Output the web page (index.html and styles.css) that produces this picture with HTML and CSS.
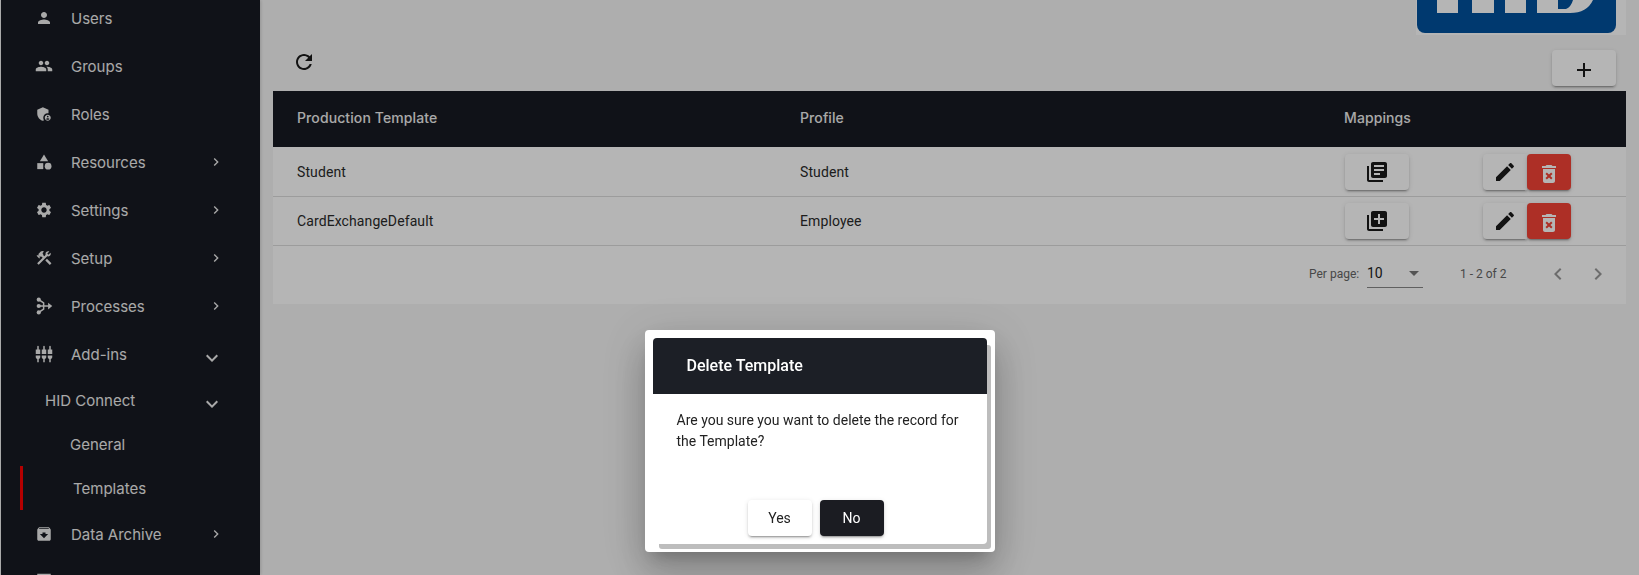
FILE: index.html
```html
<!DOCTYPE html>
<html lang="en">
<head>
<meta charset="utf-8">
<title>Templates</title>
<link rel="stylesheet" href="styles.css">
</head>
<body>
<div class="app">
  <nav class="sidebar">
    <a class="nav-row"><svg class="nav-icon" viewBox="0 0 24 24"><path d="M12 12c2.21 0 4-1.79 4-4s-1.79-4-4-4-4 1.79-4 4 1.79 4 4 4zm0 2c-2.67 0-8 1.34-8 4v2h16v-2c0-2.66-5.33-4-8-4z"/></svg><span class="nav-label">Users</span></a>
    <a class="nav-row"><svg class="nav-icon" viewBox="0 0 24 24"><path d="M16 11c1.66 0 2.99-1.34 2.99-3S17.66 5 16 5c-1.66 0-3 1.34-3 3s1.34 3 3 3zm-8 0c1.66 0 2.99-1.34 2.99-3S9.66 5 8 5C6.34 5 5 6.34 5 8s1.34 3 3 3zm0 2c-2.33 0-7 1.17-7 3.5V19h14v-2.5c0-2.33-4.67-3.5-7-3.5zm8 0c-.29 0-.62.02-.97.05 1.16.84 1.97 1.97 1.97 3.45V19h6v-2.5c0-2.33-4.67-3.5-7-3.5z"/></svg><span class="nav-label">Groups</span></a>
    <a class="nav-row"><svg class="nav-icon" viewBox="0 0 24 24"><path d="M17 11c.34 0 .67.04 1 .09V6.27L10.5 3 3 6.27v4.91c0 4.54 3.2 8.79 7.5 9.82.55-.13 1.08-.32 1.6-.55-.69-.98-1.1-2.17-1.1-3.45 0-3.31 2.69-6 6-6z"/><path d="M17 13c-2.21 0-4 1.79-4 4s1.79 4 4 4 4-1.79 4-4-1.79-4-4-4zm0 1.38c.62 0 1.12.51 1.12 1.12s-.51 1.12-1.12 1.12-1.12-.51-1.12-1.12.5-1.12 1.12-1.12zm0 5.37c-.93 0-1.74-.46-2.24-1.17.05-.72 1.51-1.08 2.24-1.08s2.19.36 2.24 1.08c-.5.71-1.31 1.17-2.24 1.17z"/></svg><span class="nav-label">Roles</span></a>
    <a class="nav-row"><svg class="nav-icon" viewBox="0 0 24 24"><path d="M12 2l-5.5 9h11z"/><circle cx="17.5" cy="17.5" r="4.5"/><path d="M3 13.5h8v8H3z"/></svg><span class="nav-label">Resources</span><svg class="nav-chevron" viewBox="0 0 24 24"><path d="M10 6L8.59 7.41 13.17 12l-4.58 4.59L10 18l6-6z"/></svg></a>
    <a class="nav-row"><svg class="nav-icon" viewBox="0 0 24 24"><path d="M19.14 12.94c.04-.3.06-.61.06-.94 0-.32-.02-.64-.07-.94l2.03-1.58c.18-.14.23-.41.12-.61l-1.92-3.32c-.12-.22-.37-.29-.59-.22l-2.39.96c-.5-.38-1.03-.7-1.62-.94l-.36-2.54c-.04-.24-.24-.41-.48-.41h-3.84c-.24 0-.43.17-.47.41l-.36 2.54c-.59.24-1.13.57-1.62.94l-2.39-.96c-.22-.08-.47 0-.59.22L2.74 8.87c-.12.21-.08.47.12.61l2.03 1.58c-.05.3-.09.63-.09.94s.02.64.07.94l-2.03 1.58c-.18.14-.23.41-.12.61l1.92 3.32c.12.22.37.29.59.22l2.39-.96c.5.38 1.03.7 1.62.94l.36 2.54c.05.24.24.41.48.41h3.84c.24 0 .44-.17.47-.41l.36-2.54c.59-.24 1.13-.56 1.62-.94l2.39.96c.22.08.47 0 .59-.22l1.92-3.32c.12-.22.07-.47-.12-.61l-2.01-1.58zM12 15.6c-1.98 0-3.6-1.62-3.6-3.6s1.62-3.6 3.6-3.6 3.6 1.62 3.6 3.6-1.62 3.6-3.6 3.6z"/></svg><span class="nav-label">Settings</span><svg class="nav-chevron" viewBox="0 0 24 24"><path d="M10 6L8.59 7.41 13.17 12l-4.58 4.59L10 18l6-6z"/></svg></a>
    <a class="nav-row"><svg class="nav-icon" viewBox="0 0 24 24"><path d="M13.78 15.3l6 6 2.11-2.16-6-6z"/><path d="M17.5 10c1.93 0 3.5-1.57 3.5-3.5 0-.58-.16-1.12-.41-1.6l-2.7 2.7-1.49-1.49 2.7-2.7c-.48-.25-1.02-.41-1.6-.41C15.57 3 14 4.57 14 6.5c0 .41.08.8.21 1.16l-1.85 1.85-1.78-1.78.71-.71-1.41-1.41L12 3.49c-1.17-1.17-3.07-1.17-4.24 0L4.22 7.03l1.41 1.41H2.81l-.71.71 3.54 3.54.71-.71V9.15l1.41 1.41.71-.71 1.78 1.78-7.41 7.41 2.12 2.12L16.34 9.79c.36.13.75.21 1.16.21z"/></svg><span class="nav-label">Setup</span><svg class="nav-chevron" viewBox="0 0 24 24"><path d="M10 6L8.59 7.41 13.17 12l-4.58 4.59L10 18l6-6z"/></svg></a>
    <a class="nav-row"><svg class="nav-icon" viewBox="0 0 24 24"><circle cx="5" cy="3.5" r="2.8"/><circle cx="5" cy="12" r="2.8"/><circle cx="5" cy="20.5" r="2.8"/><path d="M5 3.5L11.5 8V16L5 20.5M5 12H20" fill="none" stroke="currentColor" stroke-width="2"/><path d="M17.5 7.5L23 12 17.5 16.5z"/></svg><span class="nav-label">Processes</span><svg class="nav-chevron" viewBox="0 0 24 24"><path d="M10 6L8.59 7.41 13.17 12l-4.58 4.59L10 18l6-6z"/></svg></a>
    <a class="nav-row"><svg class="nav-icon" viewBox="0 0 24 24"><path d="M5 2c0-.55-.45-1-1-1s-1 .45-1 1v4H1v6h6V6H5V2zm4 14c0 1.3.84 2.4 2 2.82V23h2v-4.18c1.16-.41 2-1.51 2-2.82v-2H9v2zm-8 0c0 1.3.84 2.4 2 2.82V23h2v-4.18C6.16 18.4 7 17.3 7 16v-2H1v2zM21 6V2c0-.55-.45-1-1-1s-1 .45-1 1v4h-2v6h6V6h-2zm-8-4c0-.55-.45-1-1-1s-1 .45-1 1v4H9v6h6V6h-2V2zm4 14c0 1.3.84 2.4 2 2.82V23h2v-4.18c1.16-.41 2-1.51 2-2.82v-2h-6v2z"/></svg><span class="nav-label">Add-ins</span><svg class="nav-expand" viewBox="0 0 24 24"><path d="M16.59 8.59L12 13.17 7.41 8.59 6 10l6 6 6-6z"/></svg></a>
    <a class="nav-row nav-sub"><span class="nav-label">HID Connect</span><svg class="nav-expand" viewBox="0 0 24 24"><path d="M16.59 8.59L12 13.17 7.41 8.59 6 10l6 6 6-6z"/></svg></a>
    <a class="nav-row nav-leaf"><span class="nav-label">General</span></a>
    <a class="nav-row nav-leaf nav-active"><span class="nav-label">Templates</span></a>
    <a class="nav-row"><svg class="nav-icon" viewBox="0 0 24 24"><path d="M20.54 5.23l-1.39-1.68C18.88 3.21 18.47 3 18 3H6c-.47 0-.88.21-1.16.55L3.46 5.23C3.17 5.57 3 6.02 3 6.5V19c0 1.1.9 2 2 2h14c1.1 0 2-.9 2-2V6.5c0-.48-.17-.93-.46-1.27zM12 17.5L6.5 12H10v-2h4v2h3.5L12 17.5zM5.12 5l.81-1h12l.94 1H5.12z"/></svg><span class="nav-label">Data Archive</span><svg class="nav-chevron" viewBox="0 0 24 24"><path d="M10 6L8.59 7.41 13.17 12l-4.58 4.59L10 18l6-6z"/></svg></a>
    <a class="nav-row"><svg class="nav-icon" viewBox="0 0 24 24"><path d="M3 1h18v20H3z"/></svg></a>
  </nav>
  <main class="main">
    <header class="brand-row">
      <div class="brand-plate">
        <svg class="logo" viewBox="0 0 199 33" role="img" aria-label="HID logo">
          <path class="logo-bg" d="M0 0H199V25A8 8 0 0 1 191 33H8A8 8 0 0 1 0 25Z"/>
          <path class="logo-mark" d="M20 0H41V13H20ZM55 0H77V13H55ZM88 0H109V13H88ZM120 0H176Q170 13 153 13H120ZM141 0V9H149Q154 7 156 0Z" fill-rule="evenodd"/>
        </svg>
      </div>
    </header>
    <div class="toolbar">
      <button class="icon-plain" type="button" aria-label="Refresh"><svg class="icon" viewBox="0 0 24 24"><path d="M17.65 6.35C16.2 4.9 14.21 4 12 4c-4.42 0-7.99 3.58-7.99 8s3.57 8 7.99 8c3.73 0 6.84-2.55 7.73-6h-2.08c-.82 2.33-3.04 4-5.65 4-3.31 0-6-2.69-6-6s2.69-6 6-6c1.66 0 3.14.69 4.22 1.78L13 11h7V4l-2.35 2.35z"/></svg></button>
      <button class="btn btn-add" type="button" aria-label="Add"><svg class="icon" viewBox="0 0 24 24"><path d="M19 13h-6v6h-2v-6H5v-2h6V5h2v6h6v2z"/></svg></button>
    </div>
    <section class="card">
      <div class="table-row table-head">
        <div class="col-a">Production Template</div>
        <div class="col-b">Profile</div>
        <div class="col-c">Mappings</div>
      </div>
      <div class="table-row table-body">
        <div class="col-a">Student</div>
        <div class="col-b">Student</div>
        <div class="col-c"><button class="btn btn-wide" type="button" aria-label="Mappings"><svg class="icon" viewBox="0 0 24 24"><path d="M4 6H2v14c0 1.1.9 2 2 2h14v-2H4V6zm16-4H8c-1.1 0-2 .9-2 2v12c0 1.1.9 2 2 2h12c1.1 0 2-.9 2-2V4c0-1.1-.9-2-2-2zm-1 9H9V9h10v2zm-4 4H9v-2h6v2zm4-8H9V5h10v2z"/></svg></button></div>
        <div class="col-d">
          <button class="btn btn-edit" type="button" aria-label="Edit"><svg class="icon" viewBox="0 0 24 24"><path d="M3 17.25V21h3.75L17.81 9.94l-3.75-3.75L3 17.25zM20.71 7.04c.39-.39.39-1.02 0-1.41l-2.34-2.34c-.39-.39-1.02-.39-1.41 0l-1.83 1.83 3.75 3.75 1.83-1.83z"/></svg></button>
          <button class="btn btn-delete" type="button" aria-label="Delete"><svg class="icon" viewBox="0 0 24 24"><path d="M6 19c0 1.1.9 2 2 2h8c1.1 0 2-.9 2-2V7H6v12zm2.46-7.12l1.41-1.41L12 12.59l2.12-2.12 1.41 1.41L13.41 14l2.12 2.12-1.41 1.41L12 15.41l-2.12 2.12-1.41-1.41L10.59 14l-2.13-2.12zM15.5 4l-1-1h-5l-1 1H5v2h14V4z"/></svg></button>
        </div>
      </div>
      <div class="table-row table-body">
        <div class="col-a">CardExchangeDefault</div>
        <div class="col-b">Employee</div>
        <div class="col-c"><button class="btn btn-wide" type="button" aria-label="Add mappings"><svg class="icon" viewBox="0 0 24 24"><path d="M4 6H2v14c0 1.1.9 2 2 2h14v-2H4V6zm16-4H8c-1.1 0-2 .9-2 2v12c0 1.1.9 2 2 2h12c1.1 0 2-.9 2-2V4c0-1.1-.9-2-2-2zm-1 9h-4v4h-2v-4H9V9h4V5h2v4h4v2z"/></svg></button></div>
        <div class="col-d">
          <button class="btn btn-edit" type="button" aria-label="Edit"><svg class="icon" viewBox="0 0 24 24"><path d="M3 17.25V21h3.75L17.81 9.94l-3.75-3.75L3 17.25zM20.71 7.04c.39-.39.39-1.02 0-1.41l-2.34-2.34c-.39-.39-1.02-.39-1.41 0l-1.83 1.83 3.75 3.75 1.83-1.83z"/></svg></button>
          <button class="btn btn-delete" type="button" aria-label="Delete"><svg class="icon" viewBox="0 0 24 24"><path d="M6 19c0 1.1.9 2 2 2h8c1.1 0 2-.9 2-2V7H6v12zm2.46-7.12l1.41-1.41L12 12.59l2.12-2.12 1.41 1.41L13.41 14l2.12 2.12-1.41 1.41L12 15.41l-2.12 2.12-1.41-1.41L10.59 14l-2.13-2.12zM15.5 4l-1-1h-5l-1 1H5v2h14V4z"/></svg></button>
        </div>
      </div>
      <footer class="pager">
        <span class="pager-label">Per page:</span>
        <div class="pager-select"><span>10</span><svg class="pager-caret" viewBox="0 0 24 24"><path d="M7 10l5 5 5-5z"/></svg></div>
        <span class="pager-range">1 - 2 of 2</span>
        <svg class="pager-nav" viewBox="0 0 24 24"><path d="M15.41 7.41L14 6l-6 6 6 6 1.41-1.41L10.83 12z"/></svg>
        <svg class="pager-nav" viewBox="0 0 24 24"><path d="M10 6L8.59 7.41 13.17 12l-4.58 4.59L10 18l6-6z"/></svg>
      </footer>
    </section>
  </main>
</div>
<div class="backdrop">
  <div class="dialog">
    <div class="dialog-card">
      <h2 class="dialog-title">Delete Template</h2>
      <p class="dialog-text">Are you sure you want to delete the record for the Template?</p>
      <div class="dialog-actions">
        <button class="dlg-btn dlg-yes" type="button">Yes</button>
        <button class="dlg-btn dlg-no" type="button">No</button>
      </div>
    </div>
  </div>
</div>
</body>
</html>
```
FILE: styles.css
```css
* { box-sizing: border-box; }
html, body { margin: 0; height: 575px; overflow: hidden; }
body { background: #f6f6f6; font-family: Roboto, "Liberation Sans", sans-serif; color: #1a1a1a; }
button { font-family: inherit; border: 0; padding: 0; cursor: pointer; }

.app { display: flex; height: 575px; }

.sidebar {
  width: 259px; margin-left: 1px; flex: none;
  background: #171a22; color: #eee;
  font-family: Inter, sans-serif; font-size: 15px;
  box-shadow: 1px 0 3px rgba(0,0,0,.15);
  overflow: hidden;
}
.nav-row { display: flex; align-items: center; height: 48px; padding-left: 34px; position: relative; }
.nav-row:first-child { margin-top: -6px; }
.nav-icon { width: 18px; height: 18px; fill: currentColor; flex: none; }
.nav-label { margin-left: 18px; }
.nav-chevron { width: 16px; height: 16px; fill: currentColor; position: absolute; left: 207px; top: 16px; }
.nav-expand { width: 24px; height: 24px; fill: currentColor; position: absolute; left: 199px; top: 16px; }
.nav-sub { height: 44px; padding-left: 44px; }
.nav-sub .nav-label { margin-left: 0; }
.nav-sub .nav-expand { top: 14px; }
.nav-leaf { height: 44px; padding-left: 69px; }
.nav-leaf .nav-label { margin-left: 0; }
.nav-active { margin-left: 19px; padding-left: 50px; border-left: 3px solid #ff0000; }

.main { flex: 1; min-width: 0; padding: 0 13px; }
.brand-row { display: flex; justify-content: flex-end; height: 35px; }
.brand-plate { width: 210px; height: 35px; background: #fff; padding-left: 1px; }
.logo { display: block; width: 199px; height: 33px; }
.logo-bg { fill: #00519d; }
.logo-mark { fill: #fff; }

.toolbar { display: flex; justify-content: space-between; height: 56px; padding-right: 10px; }
.icon { width: 24px; height: 24px; fill: currentColor; display: block; }
.icon-plain { background: transparent; margin: 15px 0 0 19px; height: 24px; color: #1a1a1a; }
.btn {
  display: flex; align-items: center; justify-content: center; height: 36px; color: #1a1a1a; background: #fff; border-radius: 4px;
  box-shadow: 0 3px 1px -2px rgba(0,0,0,.2), 0 2px 2px 0 rgba(0,0,0,.14), 0 1px 5px 0 rgba(0,0,0,.12);
}
.btn-add { width: 64px; margin-top: 15px; }
.btn-add .icon { margin-top: 4px; }
.btn-wide { width: 64px; }
.btn-edit { width: 44px; border-radius: 4px 0 0 4px; }
.btn-delete { width: 44px; background: #f44336; color: #fff; }
.btn-delete .icon { margin-top: 4px; }

.card { background: #fff; }
.table-row { display: flex; align-items: center; font-size: 14px; }
.table-head { height: 56px; padding-bottom: 3px; background: #171a22; color: #eee; font-family: Inter, sans-serif; font-weight: 500; letter-spacing: .1px; }
.table-body { height: 49.5px; padding-top: 1px; border-bottom: 1px solid #dcdcdc; color: #2a2a2a; letter-spacing: .1px; }
.col-a { width: 502px; padding-left: 24px; }
.col-b { width: 544px; padding-left: 25px; }
.col-c { width: 138px; }
.col-d { display: flex; margin-left: 26px; }
.table-head .col-c { padding-left: 25px; }
.table-body .col-c { padding-left: 26px; }

.pager { display: flex; align-items: center; height: 58px; padding-bottom: 2px; font-size: 12px; color: #666; white-space: nowrap; }
.pager-label { margin-left: 1036px; width: 58px; }
.pager-select { display: flex; align-items: center; justify-content: space-between; width: 56px; height: 28px; border-bottom: 1px solid #888; font-size: 14px; color: #222; padding-bottom: 2px; }
.pager-caret { width: 24px; height: 24px; fill: #777; margin-right: -3px; }
.pager-range { margin-left: 37px; width: 47px; }
.pager-nav { width: 24px; height: 24px; fill: #999; margin-left: 39px; }
.pager-nav + .pager-nav { margin-left: 16px; }

.backdrop { position: fixed; inset: 0; background: rgba(0,0,0,.29); display: flex; justify-content: center; align-items: flex-start; }
.dialog {
  width: 350px; height: 222px; margin-top: 330px; padding: 8px; background: #fff; border-radius: 4px;
  box-shadow: 0 11px 15px -7px rgba(0,0,0,.2), 0 24px 38px 3px rgba(0,0,0,.14), 0 9px 46px 8px rgba(0,0,0,.12);
}
.dialog-card { height: 206px; background: #fff; border-radius: 4px; box-shadow: 5px 6px 0 -1px #bdbdbd; display: flex; flex-direction: column; }
.dialog-title { margin: 0; height: 56px; background: #1c1f26; color: #fff; border-radius: 4px 4px 0 0; font-size: 16px; font-weight: 500; line-height: 56px; padding-left: 34px; }
.dialog-text { margin: 15.5px 24px 0; font-size: 14px; line-height: 21.5px; color: #222; flex: 1; }
.dialog-actions { display: flex; justify-content: center; gap: 8px; height: 44px; padding-right: 8px; }
.dlg-btn { width: 64px; height: 36px; border-radius: 4px; font-size: 14px; box-shadow: 0 3px 1px -2px rgba(0,0,0,.2), 0 2px 2px 0 rgba(0,0,0,.14), 0 1px 5px 0 rgba(0,0,0,.12); }
.dlg-yes { background: #fff; color: #222; }
.dlg-no { background: #1b1c22; color: #fff; }
```
